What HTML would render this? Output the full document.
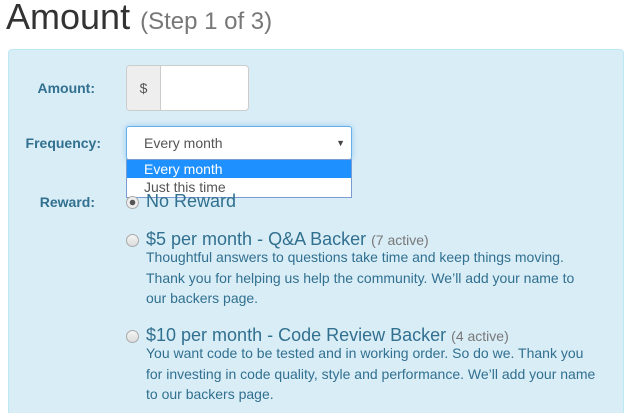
<!DOCTYPE html>
<html><head><style>
html,body{margin:0;width:626px;height:413px;overflow:hidden;background:#fff;font-family:"Liberation Sans",sans-serif;position:relative}
.a{position:absolute;white-space:nowrap}
h1{position:absolute;left:6px;top:-4px;margin:0;font-weight:normal;font-size:36px;color:#333}
h1 small{font-size:24px;color:#777}
.panel{position:absolute;left:8px;top:49px;width:614px;height:380px;background:#d9edf7;border:1px solid #bce8f1;border-radius:4px}
.lbl{font-weight:bold;font-size:14px;color:#31708f;text-align:right}
.radio{position:absolute;width:11px;height:11px;border-radius:50%;border:1px solid #aaa;background:linear-gradient(#f4f4f4,#ddd)}
.t{font-size:18px;color:#31708f}
.t small{font-size:14px;color:#777}
.d{font-size:14px;color:#31708f;line-height:20.5px}
</style></head><body>
<h1>Amount <small>(Step 1 of 3)</small></h1>
<div class="panel"></div>
<div class="a lbl" style="right:531px;top:80px">Amount:</div>
<div class="a" style="left:126px;top:65px;width:121px;height:44px;border:1px solid #ccc;border-radius:4px;background:#fff;overflow:hidden">
 <div style="width:33px;height:44px;background:#eee;border-right:1px solid #ccc;font-size:14px;color:#555;line-height:44px;text-align:center">$</div></div>
<div class="a lbl" style="right:525px;top:135px">Frequency:</div>
<div class="a" style="left:126px;top:126px;width:224px;height:32px;border:1px solid #66afe9;border-radius:3px;background:#fff;box-shadow:0 0 6px rgba(102,175,233,.6);font-size:14px;color:#555;line-height:32px"><span style="margin-left:17px">Every month</span><span style="position:absolute;right:6px;top:0;font-size:9px;color:#444">▼</span></div>
<div class="a" style="left:126px;top:159px;width:224px;height:37px;border:1px solid #7a9cd3;background:#fff;font-size:14px">
 <div style="background:#1e90ff;color:#fff;height:18px;line-height:18px;padding-left:17px">Every month</div>
 <div style="color:#555;height:18px;line-height:18px;padding-left:17px">Just this time</div></div>
<div class="a lbl" style="right:531px;top:194px">Reward:</div>
<div class="radio" style="left:126px;top:196px;background:radial-gradient(#555 0 2.5px,#eee 3px)"></div>
<div class="a t" style="left:146px;top:191px">No Reward</div>
<div class="radio" style="left:126px;top:234px"></div>
<div class="a t" style="left:146px;top:229px">$5 per month - Q&amp;A Backer <small>(7 active)</small></div>
<div class="a d" style="left:146px;top:247px">Thoughtful answers to questions take time and keep things moving.<br>Thank you for helping us help the community. We’ll add your name to<br>our backers page.</div>
<div class="radio" style="left:126px;top:330px"></div>
<div class="a t" style="left:146px;top:325px">$10 per month - Code Review Backer <small>(4 active)</small></div>
<div class="a d" style="left:146px;top:343px">You want code to be tested and in working order. So do we. Thank you<br>for investing in code quality, style and performance. We’ll add your name<br>to our backers page.</div>
</body></html>
